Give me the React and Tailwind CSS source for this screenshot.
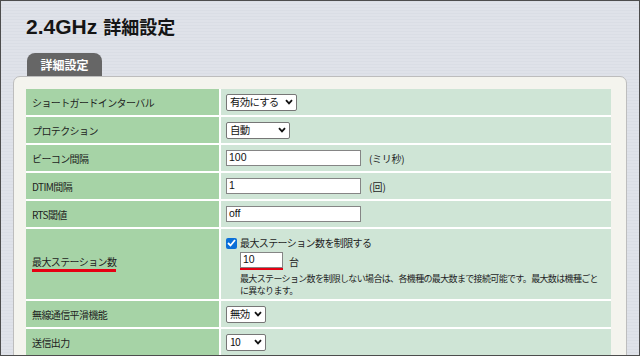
import React from "react";

const jp = { fontFamily: '"Noto Sans CJK JP", "Noto Sans", sans-serif' };
const lat = { fontFamily: '"Liberation Sans", "Noto Sans CJK JP", sans-serif' };

function Chevron() {
  return (
    <svg width="8" height="6" viewBox="0 0 8 6" className="shrink-0">
      <polyline points="1,1.2 4,4.4 7,1.2" fill="none" stroke="#111" strokeWidth="1.8" />
    </svg>
  );
}

function Select({ text, w }) {
  return (
    <div
      className="flex h-[17px] items-center justify-between rounded-[2px] border border-[#767676] bg-white pl-[3px] pr-[3px] text-[10.4px] tracking-[-0.7px] text-[#111]"
      style={{ width: w, ...jp }}
    >
      <span className="leading-none">{text}</span>
      <Chevron />
    </div>
  );
}

function Input({ value, w = 135 }) {
  return (
    <div
      className="flex h-[16px] items-center border border-[#858585] bg-white pl-[2px] text-[10.5px] text-[#111]"
      style={{ width: w, ...lat }}
    >
      {value}
    </div>
  );
}

function Label({ children, h = "h-[26px]" }) {
  return (
    <div
      className={`flex ${h} items-center bg-[#a6d3a6] pl-[6px] text-[10px] tracking-[-0.6px] text-[#1e1e1e]`}
      style={jp}
    >
      {children}
    </div>
  );
}

function Value({ children, h = "h-[26px]" }) {
  return <div className={`flex ${h} items-center bg-[#cfe5d6] pl-[5px] text-[#1e1e1e]`}>{children}</div>;
}

export default function App() {
  return (
    <div className="relative h-[356px] w-[640px] overflow-hidden border border-[#4d4d4d] bg-[repeating-linear-gradient(0deg,#dfe2e9_0px,#dfe2e9_2px,#d5d9e1_3px)]">
      <h1 className="ml-[25px] mt-[13px] flex h-[24px] items-baseline font-bold text-[#151515]">
        <span className="text-[21px] leading-[24px]" style={lat}>2.4GHz</span>
        <span className="ml-[6px] text-[18px] leading-[24px]" style={jp}>詳細設定</span>
      </h1>
      <div
        className="ml-[26px] mt-[15px] flex h-[23px] w-[75px] items-center justify-center rounded-t-[8px] bg-[#666666] text-[12px] font-bold text-white"
        style={jp}
      >
        詳細設定
      </div>
      <div className="ml-[12px] h-[300px] w-[614px] rounded-t-[7px] border border-[#bdbdbd] bg-[#f4f4ee] px-[12px] pt-[12px]">
        <div className="grid w-[585px] grid-cols-[193px_1fr] gap-[2px] bg-white">
          <Label>ショートガードインターバル</Label>
          <Value>
            <Select text="有効にする" w={71} />
          </Value>

          <Label>プロテクション</Label>
          <Value>
            <Select text="自動" w={64} />
          </Value>

          <Label>ビーコン間隔</Label>
          <Value>
            <Input value="100" />
            <span className="ml-[8px] text-[10px] tracking-[-0.3px]" style={jp}>(ミリ秒)</span>
          </Value>

          <Label>DTIM間隔</Label>
          <Value>
            <Input value="1" />
            <span className="ml-[8px] text-[10px]" style={jp}>(回)</span>
          </Value>

          <Label>RTS閾値</Label>
          <Value>
            <Input value="off" />
          </Value>

          <Label h="h-[70px]">
            <span className="inline-block border-b-[3px] border-[#e60012] pb-[1px] leading-[12px]">最大ステーション数</span>
          </Label>
          <div className="flex h-[70px] flex-col bg-[#cfe5d6] pl-[5px] pt-[8px] text-[#1e1e1e]" style={jp}>
            <div className="flex h-[12px] items-center">
              <div className="flex h-[11px] w-[11px] items-center justify-center rounded-[2px] bg-[#0b6fd8]">
                <svg width="9" height="8" viewBox="0 0 9 8">
                  <polyline points="1,4 3.5,6.5 8,1" fill="none" stroke="#fff" strokeWidth="1.8" />
                </svg>
              </div>
              <span className="ml-[3px] text-[10px] leading-none tracking-[-0.6px]">最大ステーション数を制限する</span>
            </div>
            <div className="ml-[14px] mt-[3px] flex items-center">
              <div className="border-b-[2px] border-[#e60012]">
                <Input value="10" w={43} />
              </div>
              <span className="ml-[6px] text-[10px]">台</span>
            </div>
            <div className="ml-[14px] mt-[3px] whitespace-nowrap text-[9px] leading-[12px] tracking-[-0.65px]">
              最大ステーション数を制限しない場合は、各機種の最大数まで接続可能です。最大数は機種ごと
              <br />
              に異なります。
            </div>
          </div>

          <Label>無線通信平滑機能</Label>
          <Value>
            <Select text="無効" w={40} />
          </Value>

          <Label>送信出力</Label>
          <Value>
            <Select text="10" w={40} />
          </Value>
        </div>
      </div>
    </div>
  );
}
